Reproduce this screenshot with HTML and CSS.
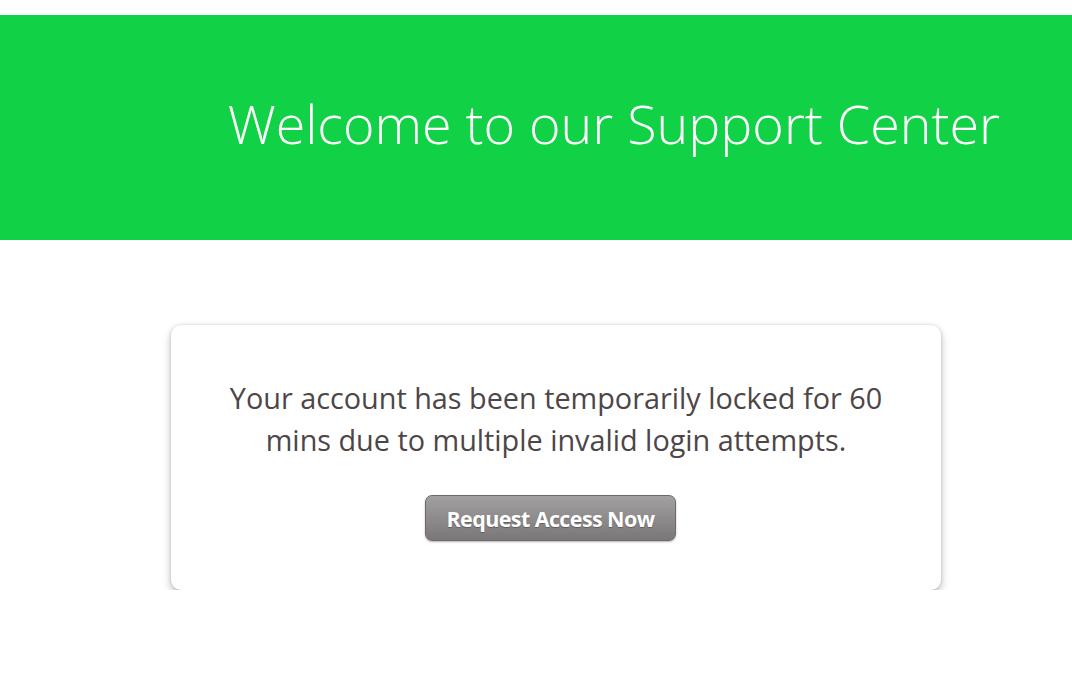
FILE: index.html
```html
<!DOCTYPE html>
<html>
<head>
<meta charset="utf-8">
<link rel="stylesheet" href="styles.css">
</head>
<body>
<header class="hero">
  <h1 class="hero-title">Welcome to our Support Center</h1>
</header>
<main class="content">
  <section class="card">
    <p class="message">Your account has been temporarily locked for 60<br>mins due to multiple invalid login attempts.</p>
    <button class="btn">Request Access Now</button>
  </section>
</main>
</body>
</html>
```
FILE: styles.css
```css
html, body {
  margin: 0;
  padding: 0;
  background: #ffffff;
}
body {
  font-family: "Open Sans", "Liberation Sans", sans-serif;
  padding-top: 15px;
}
.hero {
  background: #11d146;
  height: 225px;
  display: flex;
  align-items: flex-start;
  justify-content: flex-end;
  padding-right: 72px;
}
.hero-title {
  margin: 0;
  margin-top: 71px;
  font-weight: 300;
  font-size: 53.8px;
  color: #ffffff;
  letter-spacing: 0;
}
.content {
  display: flex;
  justify-content: center;
  padding-top: 85px;
  padding-left: 40px;
}
.card {
  width: 770px;
  height: 265px;
  box-sizing: border-box;
  background: #fff;
  border-radius: 10px;
  box-shadow: 0 4px 8px rgba(0,0,0,0.26), 0 0 3px rgba(0,0,0,0.14);
  display: flex;
  flex-direction: column;
  align-items: center;
  padding-top: 52px;
}
.message {
  margin: 0;
  text-align: center;
  font-size: 28.8px;
  line-height: 42px;
  color: #4d4647;
  letter-spacing: 0;
}
.btn {
  margin-top: 34px;
  margin-right: 11px;
  width: 251px;
  height: 46px;
  border-radius: 7px;
  border: 1px solid #6e6a6b;
  background: linear-gradient(#a3a0a1, #7b7778);
  color: #fff;
  font-family: "Open Sans", "Liberation Sans", sans-serif;
  font-weight: 700;
  font-size: 21.5px;
  letter-spacing: -0.6px;
  text-shadow: 0 1px 1px rgba(0,0,0,0.3);
  box-shadow: 0 1px 2px rgba(0,0,0,0.3);
  padding: 0;
}
```
